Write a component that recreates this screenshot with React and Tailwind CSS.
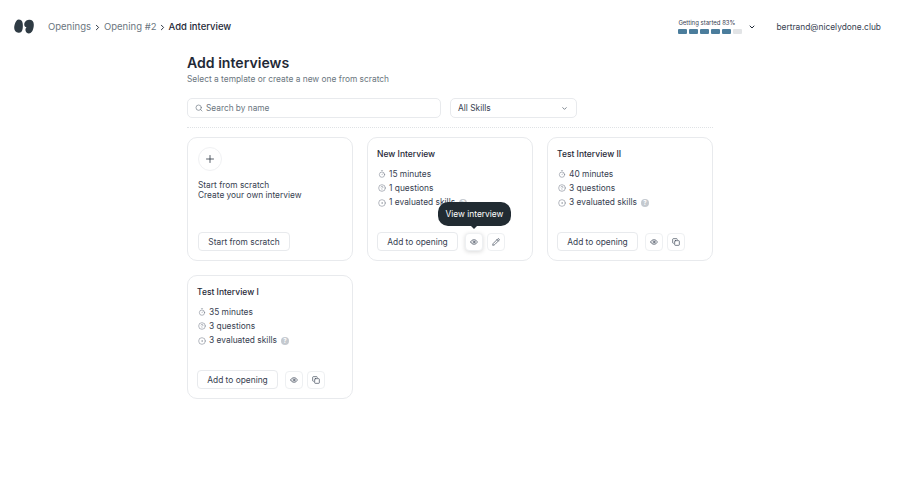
import React from "react";
import { ChevronRight, ChevronDown, Search, Plus, Eye, Pencil, Copy, Timer, CircleHelp, CircleDot } from "lucide-react";

function Meta({ icon: Icon, children, help }) {
  return (
    <div className="flex items-center h-[14px] mb-[0.3px]">
      <Icon className="w-[8px] h-[8px] text-[#6b7280] mr-[3px] ml-[1px]" strokeWidth={1.5} />
      <span className="text-[8.4px] text-[#374151]">{children}</span>
      {help && (
        <span className="ml-[4px] w-[8px] h-[8px] rounded-full bg-[#c4c9cf] text-white text-[6px] leading-[8px] text-center font-bold">?</span>
      )}
    </div>
  );
}

function IconBtn({ icon: Icon, active }) {
  return (
    <button className={"w-[18px] h-[18px] rounded-[4px] border border-[#eef0f2] bg-white flex items-center justify-center " + (active ? "shadow-[0_1px_4px_rgba(0,0,0,0.15)]" : "")}>
      <Icon className="w-[8px] h-[8px] text-[#374151]" strokeWidth={2} />
    </button>
  );
}

function Card({ title, minutes, questions, skills, second, tooltip }) {
  return (
    <div className="relative h-[124px] rounded-[10px] border border-[#e8eaed] bg-white px-[9px] pt-[8.5px] pb-[9px] flex flex-col">
      <div className="text-[8.5px] font-medium text-[#1f2937] leading-[14px] mb-[6.5px]">{title}</div>
      <Meta icon={Timer}>{minutes} minutes</Meta>
      <Meta icon={CircleHelp}>{questions} questions</Meta>
      <Meta icon={CircleDot} help>{skills} evaluated skills</Meta>
      <div className="mt-auto flex items-center">
        <button className="h-[19px] w-[81px] pt-[1px] rounded-[4px] border border-[#e8eaed] bg-white text-[8.4px] text-[#374151]">Add to opening</button>
        <div className="ml-[7px] mr-[4px]"><IconBtn icon={Eye} active={tooltip} /></div>
        <IconBtn icon={second} />
      </div>
      {tooltip && (
        <div className="absolute left-[70px] top-[64px] w-[73px] h-[24px] rounded-[10px] bg-[#212b32] text-white text-[8.4px] flex items-center justify-center">
          View interview
          <span className="absolute left-[32px] top-[23px] w-0 h-0 border-x-[4px] border-x-transparent border-t-[4px] border-t-[#212b32]" />
        </div>
      )}
    </div>
  );
}

export default function App() {
  return (
    <div className="w-[900px] h-[484px] bg-white overflow-hidden font-['Inter',sans-serif]">
      <header className="h-[53px] flex items-center pl-[14px] pr-[19px]">
        <svg width="20" height="15" viewBox="0 0 20 15" className="shrink-0 mr-[14px]">
          <path d="M4.5 0.5C7 0.5 8.5 2 8.7 4.5C8.9 6 9 8 8.6 10C8 13 6.5 14 4.5 13.8C1.8 13.5 0.3 11.5 0.2 9C0.1 6.5 1 4 2 2.5C2.7 1.2 3.5 0.5 4.5 0.5Z" fill="#2f3b44" />
          <path d="M15 0.7C18 0.5 19.8 2.5 19.8 5.5C19.8 8.5 19 12.5 16.5 14C14.5 15 12 14 11.5 11.5C11.2 10 12 9 12.5 8C11.5 8.2 10.5 7.5 10.3 6C10 3 12 1 15 0.7Z" fill="#2f3b44" />
        </svg>
        <nav className="flex items-center text-[9.5px] mt-[1px]">
          <span className="text-[#6b7680]">Openings</span>
          <ChevronRight className="w-[9px] h-[9px] mx-[2px] text-[#1f2937]" strokeWidth={2.5} />
          <span className="text-[#6b7680]">Opening #2</span>
          <ChevronRight className="w-[9px] h-[9px] mx-[1.5px] text-[#1f2937]" strokeWidth={2.5} />
          <span className="font-medium text-[#1f2937]">Add interview</span>
        </nav>
        <div className="ml-auto flex items-center">
          <div className="w-[64px]">
            <div className="text-[6px] leading-[8px] text-[#374151] mb-[2px]">Getting started 83%</div>
            <div className="flex gap-[2px]">
              {[1, 1, 1, 1, 1, 0].map((on, i) => (
                <span key={i} className={"w-[9px] h-[5px] rounded-[1px] " + (on ? "bg-[#4b7d9c]" : "bg-[#e2e4e6]")} />
              ))}
            </div>
          </div>
          <ChevronDown className="w-[8px] h-[8px] ml-[6px] text-[#1f2937]" strokeWidth={3} />
          <span className="ml-[20px] mt-[1px] text-[8.4px] text-[#374151]">bertrand@nicelydone.club</span>
        </div>
      </header>

      <main className="w-[526px] mx-auto">
        <h1 className="text-[14.1px] leading-[20px] font-semibold text-[#1f2937]">Add interviews</h1>
        <p className="text-[8.4px] leading-[12px] text-[#6b7680] mb-[13px]">Select a template or create a new one from scratch</p>
        <div className="flex gap-[9px]">
          <div className="w-[254px] h-[20px] rounded-[5px] border border-[#e8eaed] flex items-center pl-[7px]">
            <Search className="w-[8px] h-[8px] text-[#6b7680] mr-[3px]" strokeWidth={2} />
            <span className="text-[8.3px] text-[#6b7680]">Search by name</span>
          </div>
          <div className="w-[127px] h-[20px] rounded-[5px] border border-[#e8eaed] flex items-center pl-[7px] pr-[8px] justify-between">
            <span className="text-[8.4px] text-[#374151]">All Skills</span>
            <ChevronDown className="w-[7px] h-[7px] text-[#6b7680]" strokeWidth={3} />
          </div>
        </div>
        <div className="border-t border-dotted border-[#dfe2e5] mt-[9px] mb-[9px]" />
        <div className="grid grid-cols-[166px_166px_166px] gap-[14px]">
          <div className="h-[124px] rounded-[10px] border border-[#e8eaed] bg-white px-[10px] pt-[9px] pb-[9px] flex flex-col">
            <div className="w-[24px] h-[24px] rounded-full border border-[#f0f1f3] flex items-center justify-center">
              <Plus className="w-[12px] h-[12px] text-[#1f2937]" strokeWidth={1.5} />
            </div>
            <div className="mt-[10px] text-[8.35px] leading-[9.5px] text-[#374151]">
              <div>Start from scratch</div>
              <div>Create your own interview</div>
            </div>
            <div className="mt-auto">
              <button className="h-[19px] w-[92px] pt-[1px] rounded-[4px] border border-[#e8eaed] bg-white text-[8.35px] text-[#374151]">Start from scratch</button>
            </div>
          </div>
          <Card title="New Interview" minutes="15" questions="1" skills="1" second={Pencil} tooltip />
          <Card title="Test Interview II" minutes="40" questions="3" skills="3" second={Copy} />
          <Card title="Test Interview I" minutes="35" questions="3" skills="3" second={Copy} />
        </div>
      </main>
    </div>
  );
}
